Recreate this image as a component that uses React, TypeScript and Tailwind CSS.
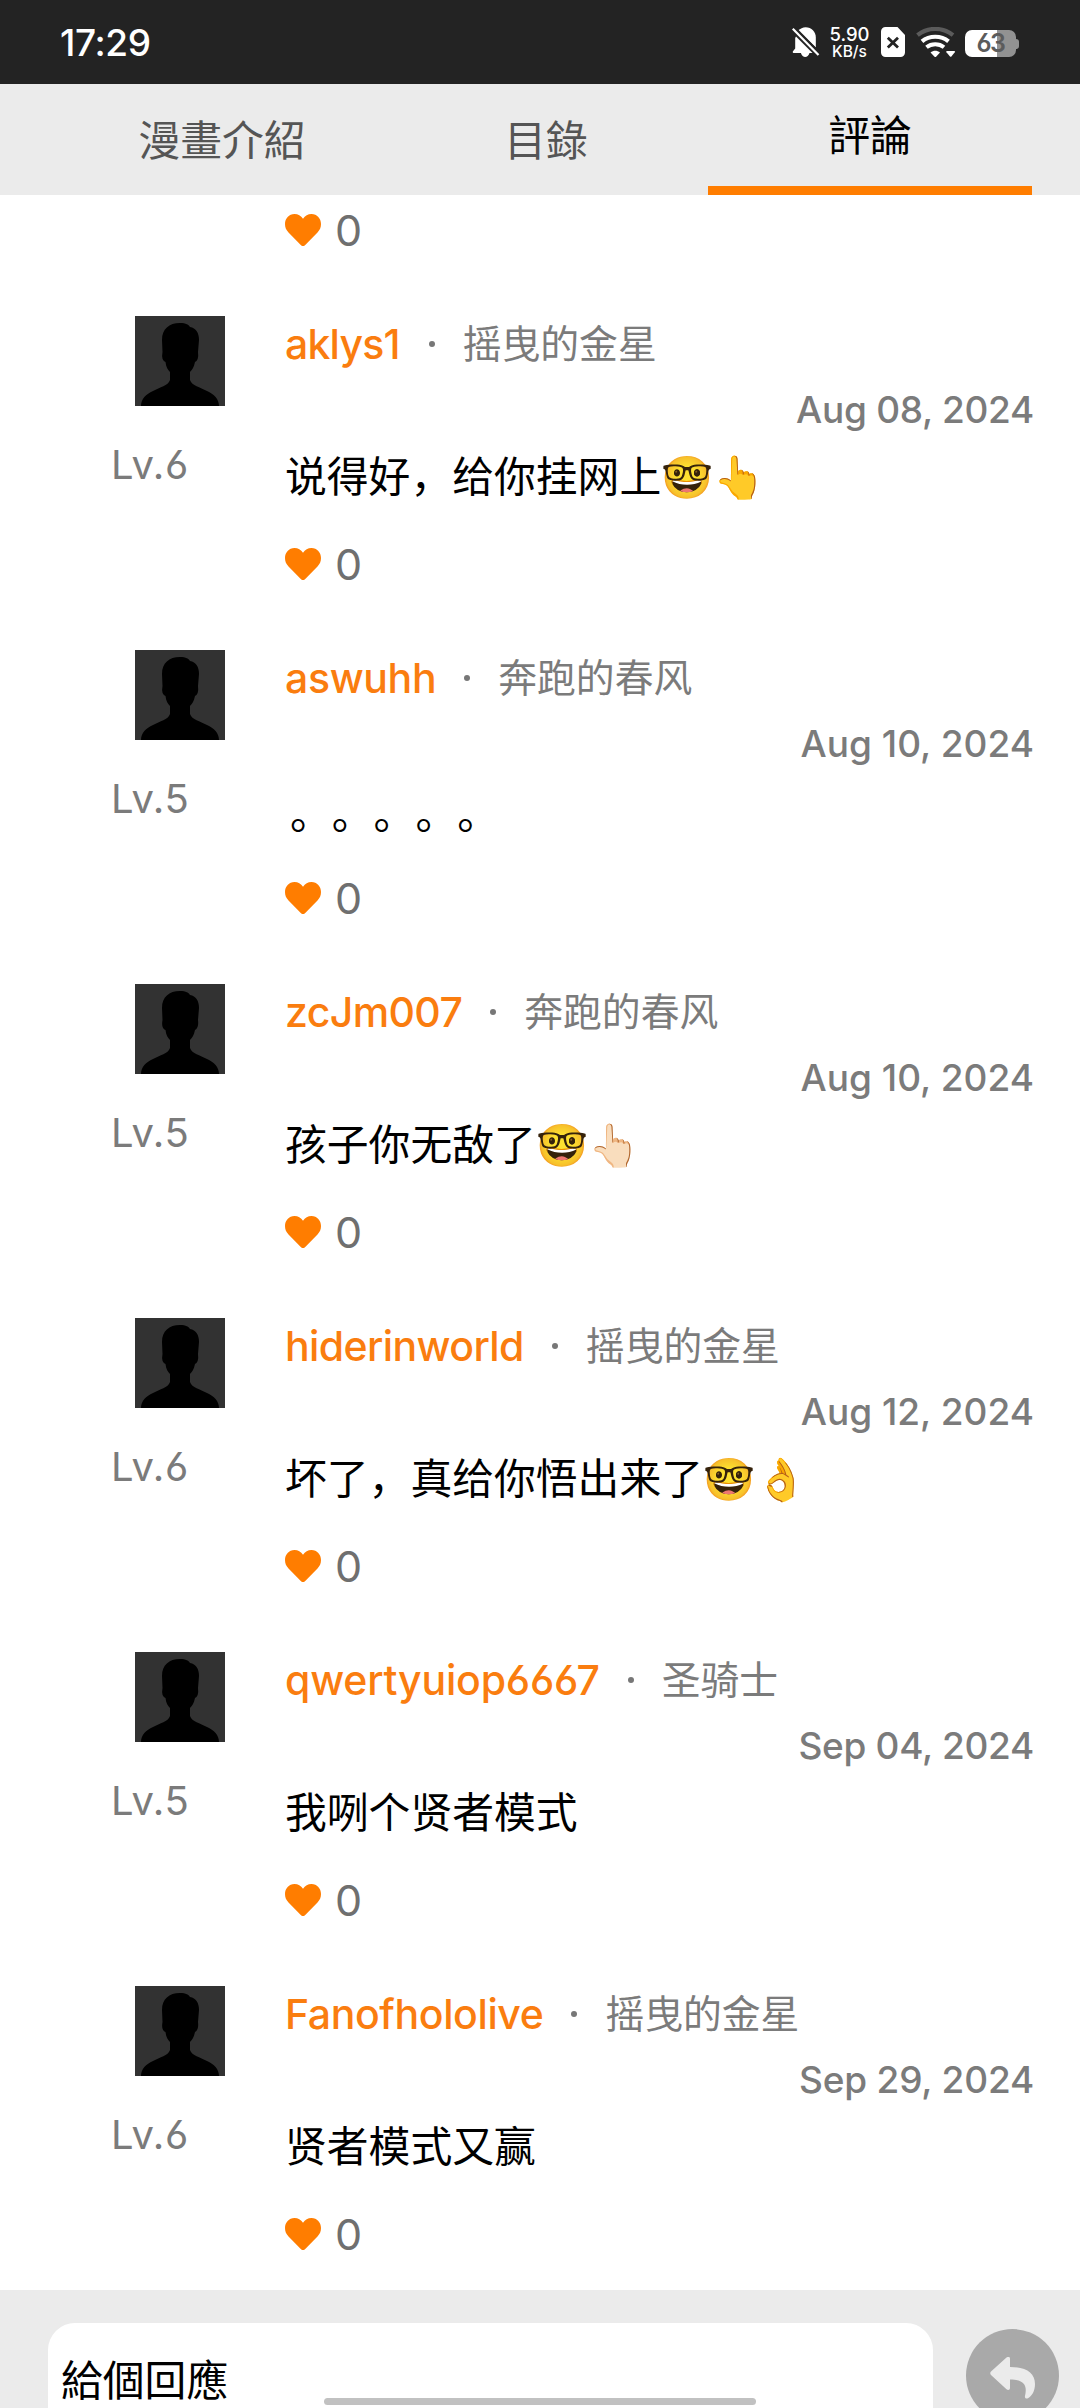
import React from "react";

type Comment = {
  name: string;
  nameClass: string;
  tier: string;
  date: string;
  dateClass: string;
  level: string;
  text: string;
  textClass?: string;
};

const comments: Comment[] = [
  { name: "aklys1", nameClass: "tracking-[-0.8px]", tier: "摇曳的金星", date: "Aug 08, 2024", dateClass: "tracking-[-0.3px]", level: "Lv.6", text: "说得好，给你挂网上🤓👆" },
  { name: "aswuhh", nameClass: "tracking-[-0.35px] mr-[-1px]", tier: "奔跑的春风", date: "Aug 10, 2024", dateClass: "tracking-[0px]", level: "Lv.5", text: "。。。。。", textClass: "pt-[3px] pl-[5px]" },
  { name: "zcJm007", nameClass: "tracking-[-0.6px] mr-[-1px]", tier: "奔跑的春风", date: "Aug 10, 2024", dateClass: "tracking-[0px]", level: "Lv.5", text: "孩子你无敌了🤓👆🏻" },
  { name: "hiderinworld", nameClass: "tracking-[-0.6px] mr-[-1px]", tier: "摇曳的金星", date: "Aug 12, 2024", dateClass: "tracking-[0px]", level: "Lv.6", text: "坏了，真给你悟出来了🤓👌" },
  { name: "qwertyuiop6667", nameClass: "tracking-[-0.2px] mr-[-1px]", tier: "圣骑士", date: "Sep 04, 2024", dateClass: "tracking-[-0.3px]", level: "Lv.5", text: "我咧个贤者模式" },
  { name: "Fanofhololive", nameClass: "tracking-[-0.4px] mr-[-1px]", tier: "摇曳的金星", date: "Sep 29, 2024", dateClass: "tracking-[-0.2px]", level: "Lv.6", text: "贤者模式又赢" },
];

function StatusIcons() {
  return (
    <div className="flex items-start pt-[27px] pr-[61px]">
      <svg className="h-[30px] w-[28px]" viewBox="0 0 28 30">
        <path fill="#fff" d="M4 9.5 20.5 26H17.5C16.7 28.6 15 30 13.2 30S9.700 28.600 8.900 26H1.500C.7 26 .5 25 1 24.300L3.200 21.500V11Z" />
        <path fill="#fff" d="M6.300 3.800C8.300 1.500 10.800.2 13.600.2 19.500.2 23.800 4.700 23.800 10.300V20.600Z" />
        <path stroke="#232323" strokeWidth="2" d="M2.500 .2 28 26.200" />
        <path stroke="#fff" strokeWidth="2.200" d="M.8 1.800 26.500 28" />
      </svg>
      <div className="ml-[11px] flex w-[37px] flex-col items-center font-medium text-white">
        <span className="h-[17px] text-[18.5px] leading-[15px]">5.90</span>
        <span className="text-[15.5px] leading-[16px]">KB/s</span>
      </div>
      <svg className="ml-[13px] h-[30px] w-[24px]" viewBox="0 0 24 30">
        <path fill="#fff" d="M4.500 0H16.500L24 8V25.500A4.500 4.500 0 0 1 19.500 30H4.500A4.500 4.500 0 0 1 0 25.500V4.500A4.500 4.500 0 0 1 4.500 0Z" />
        <path stroke="#232323" strokeWidth="2.800" d="M6.800 10.800 17 20.600M17 10.800 6.800 20.600" />
      </svg>
      <svg className="ml-[11px] h-[30px] w-[40px]" viewBox="0 0 40 30" fill="none">
        <path stroke="#5b5b5b" strokeWidth="4.200" d="M1.500 8.200C12 -.2 26.500 -.2 37 8.200" />
        <path stroke="#fff" strokeWidth="4.200" d="M6 14.300C13.500 8.200 25 8.200 32.500 14.300" />
        <path stroke="#fff" strokeWidth="4" d="M10.500 20.200C15.500 16.200 23 16.200 28 20.200" />
        <path fill="#fff" d="M14.500 25.500C17.500 23.200 21 23.200 24 25.500L20.300 29.500Q19.300 30.500 18.300 29.500Z" />
        <path fill="#fff" d="M31 24H38.200Q39.700 24 38.800 25.200L35.400 29.500Q34.700 30.200 34 29.500L30.400 25.200Q29.600 24 31 24Z" />
      </svg>
      <div className="mt-[3px] ml-[9px] flex items-center">
        <div className="flex h-[27px] w-[51px] items-center justify-center rounded-[7px] bg-linear-to-r from-white from-[63%] to-[#929292] to-[63%] text-[25px] leading-none font-semibold tracking-[-1.5px] text-[#5c5c5c] [font-feature-settings:'cv03']">
          63
        </div>
        <div className="h-[10px] w-[3px] rounded-r-[3px] bg-[#929292]" />
      </div>
    </div>
  );
}

function Avatar() {
  return (
    <svg className="ml-[23px] block h-[90px] w-[90px] bg-[#323232]" viewBox="0 0 90 90">
      <path d="M45 7C51 7 54 9 55 11 61 12 64 17 64 24L63 36Q64 44 60 46C59 51 57 54 55 56V64C57 70 65 71 72 75 79 78 84 83 84 90H6C6 83 11 78 18 75 25 71 33 70 35 64V56C33 54 31 51 30.500 46Q26 44 27.500 36L27 24C27 13 34 7 45 7Z" />
    </svg>
  );
}

function Likes() {
  return (
    <div className="flex h-[32px] items-center">
      <svg className="h-[32px] w-[36px]" viewBox="0 0 36 32" fill="#ff7d00">
        <path d="M18 4.800C20 1.800 23 0 26.500 0 32 0 36 4.500 36 10 36 13.500 34.800 16 32.500 18.500L20 31.200Q18 33 16 31.200L3.500 18.500C1.200 16 0 13.500 0 10 0 4.500 4 0 9.500 0 13 0 16 1.800 18 4.800Z" />
      </svg>
      <span className="ml-[14px] text-[43px] leading-none tracking-[-1px] text-[#6f6f6f]">0</span>
    </div>
  );
}

function CommentRow({ c }: { c: Comment }) {
  return (
    <article className="flex h-[334px] pr-[46px] pl-[111px]">
      <div className="w-[174px] shrink-0">
        <div className="pl-px">
          <Avatar />
        </div>
        <div className="mt-[35px] text-[40px] leading-[48px] tracking-[0.6px] text-[#7b7b7b] [font-feature-settings:'cv03']">{c.level}</div>
      </div>
      <div className="flex min-w-0 grow flex-col">
        <div className="flex h-[56px] items-center">
          <span className={"text-[41px] leading-[56px] font-medium text-[#fa7d0f] [font-feature-settings:'cv03'] " + c.nameClass}>{c.name}</span>
          <span className="ml-[29px] size-[6px] rounded-full bg-[#777]" />
          <span className="ml-[28px] text-[38.8px] leading-[56px] text-[#7b7b7b]">{c.tier}</span>
        </div>
        <div className={"mt-[14px] text-right text-[37px] leading-[48px] font-medium text-[#7b7b7b] " + c.dateClass}>{c.date}</div>
        <div className={"mt-[15px] h-[56px] text-[41.8px] leading-[56px] whitespace-nowrap text-black [text-spacing-trim:space-all] " + (c.textClass ?? "")}>
          {c.text}
        </div>
        <div className="mt-[43px]">
          <Likes />
        </div>
      </div>
    </article>
  );
}

export default function App() {
  return (
    <div className="flex h-[2408px] w-[1080px] flex-col overflow-hidden bg-white font-['Inter','Noto_Sans_CJK_SC',sans-serif]">
      <header className="flex h-[84px] shrink-0 justify-between bg-[#232323]">
        <span className="pl-[60px] text-[37px] leading-[85px] font-medium tracking-[-0.4px] text-white">17:29</span>
        <StatusIcons />
      </header>

      <nav className="grid h-[111px] shrink-0 grid-cols-3 bg-[#ebebeb] pr-[48px] pl-[60px] text-center font-['Noto_Sans_CJK_TC',sans-serif] text-[41.8px] leading-[109px] text-[#555]">
        <div>漫畫介紹</div>
        <div>目錄</div>
        <div className="h-[111px] border-b-[9px] border-[#ff7d00] leading-[99px] text-black">評論</div>
      </nav>

      <main className="min-h-0 grow overflow-hidden">
        <div className="h-[121px] pt-[19px] pl-[285px]">
          <Likes />
        </div>
        {comments.map((c) => (
          <CommentRow key={c.name} c={c} />
        ))}
      </main>

      <footer className="relative flex h-[118px] shrink-0 items-start bg-[#ebebeb] pl-[48px]">
        <div className="mt-[33px] h-[85px] w-[885px] rounded-t-[27px] bg-white pt-[30px] pl-[13px] font-['Noto_Sans_CJK_TC',sans-serif] text-[41.8px] leading-[50px] text-black">
          給個回應
        </div>
        <div className="mt-[39px] ml-[33px] h-[79px] w-[93px] shrink-0 overflow-hidden">
          <div className="size-[93px] rounded-full bg-[#a9a9a9] pt-[28px] pl-[24px]">
            <svg className="h-[42px] w-[46px]" viewBox="0 0 46 42" fill="#ebebeb">
              <path d="M20 1.500V10C36 10 45 16 45 27 45 34 42 39 38 41.300 36 42 34.500 41.300 35 39 37 30 36 22.500 20 22.500V31C20 33 18 33.500 16.500 32.300L1 18Q-.5 16.200 1 14.500L16.500.5C18 -.6 20 -.3 20 1.500Z" />
            </svg>
          </div>
        </div>
        <div className="absolute top-[108px] left-[324px] h-[7px] w-[432px] rounded-full bg-[#c1c1c1]" />
      </footer>
    </div>
  );
}
